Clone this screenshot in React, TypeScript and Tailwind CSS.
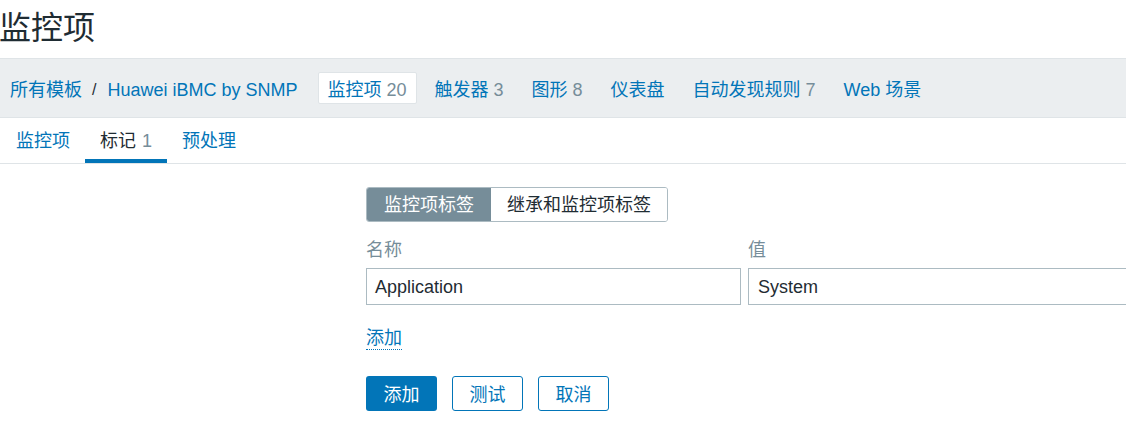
import React from "react";

const font = { fontFamily: '"Liberation Sans", "Noto Sans CJK SC", sans-serif' };

export default function App() {
  const navItems: { label: string; count?: string }[] = [
    { label: "触发器", count: "3" },
    { label: "图形", count: "8" },
    { label: "仪表盘" },
    { label: "自动发现规则", count: "7" },
    { label: "Web 场景" },
  ];
  return (
    <div className="w-[1126px] h-[432px] overflow-hidden bg-white text-[#1f2c33]" style={font}>
      {/* header */}
      <div className="h-[58px] flex items-center">
        <h1 className="text-[32px] leading-[40px] pb-[2px] -ml-[1px]">监控项</h1>
      </div>
      {/* nav bar */}
      <div className="h-[60px] bg-[#ebeef0] border-t border-b border-[#dfe4e7] flex items-center pl-[10px] pt-[3px] text-[18px] leading-[24px]">
        <span className="text-[#0275b8]">所有模板</span>
        <span className="ml-[10px] mr-[11px] text-[#1f2c33] text-[16px]">/</span>
        <span className="text-[#0275b8]">Huawei iBMC by SNMP</span>
        <div className="ml-[20px] flex items-center gap-[8px]">
          <span className="h-[32px] -mt-[3px] flex items-center pt-[3px] px-[9px] bg-white border border-[#dfe4e7] rounded-[2px] text-[#0275b8]">
            监控项<span className="ml-[5px] text-[#768d99]">20</span>
          </span>
          {navItems.map((it) => (
            <span key={it.label} className="px-[10px] text-[#0275b8]">
              {it.label}
              {it.count && <span className="ml-[5px] text-[#768d99]">{it.count}</span>}
            </span>
          ))}
        </div>
      </div>
      {/* tabs */}
      <div className="h-[46px] border-b border-[#dfe4e7] flex pl-[1px] text-[18px] leading-[24px]">
        <div className="px-[15px] flex items-center text-[#0275b8]">监控项</div>
        <div className="px-[15px] flex items-center border-b-[4px] border-[#0275b8] pt-[4px]">
          标记<span className="ml-[6px] text-[#768d99]">1</span>
        </div>
        <div className="px-[15px] flex items-center text-[#0275b8]">预处理</div>
      </div>
      {/* form */}
      <div className="pl-[366px] pt-[23px] text-[18px] leading-[24px]">
        <div className="flex">
          <div className="flex h-[35px] border border-[#acbbc2] rounded-[3px] overflow-hidden">
            <div className="bg-[#768d99] text-white px-[17px] flex items-center">监控项标签</div>
            <div className="bg-white px-[16px] flex items-center text-[#1f2c33]">继承和监控项标签</div>
          </div>
        </div>
        <div className="flex gap-[7px] mt-[16px]">
          <div className="flex flex-col">
            <label className="text-[#768d99] h-[24px]">名称</label>
            <div className="mt-[6px] w-[375px] h-[37px] border border-[#acbbc2] flex items-center px-[8px] text-[#1f2c33]">Application</div>
          </div>
          <div className="flex flex-col">
            <label className="text-[#768d99] h-[24px]">值</label>
            <div className="mt-[6px] w-[420px] h-[37px] border border-[#acbbc2] flex items-center px-[9px] text-[#1f2c33]">System</div>
          </div>
        </div>
        <div className="mt-[22px] flex">
          <span className="text-[#0275b8] border-b border-dotted border-[#0275b8] leading-[22px]">添加</span>
        </div>
        <div className="mt-[26px] flex gap-[15px]">
          <button className="w-[71px] h-[35px] pt-[2px] bg-[#0275b8] text-white rounded-[3px] flex items-center justify-center">添加</button>
          <button className="w-[71px] h-[35px] pt-[2px] bg-white text-[#0275b8] border border-[#0275b8] rounded-[3px] flex items-center justify-center">测试</button>
          <button className="w-[71px] h-[35px] pt-[2px] bg-white text-[#0275b8] border border-[#0275b8] rounded-[3px] flex items-center justify-center">取消</button>
        </div>
      </div>
    </div>
  );
}
